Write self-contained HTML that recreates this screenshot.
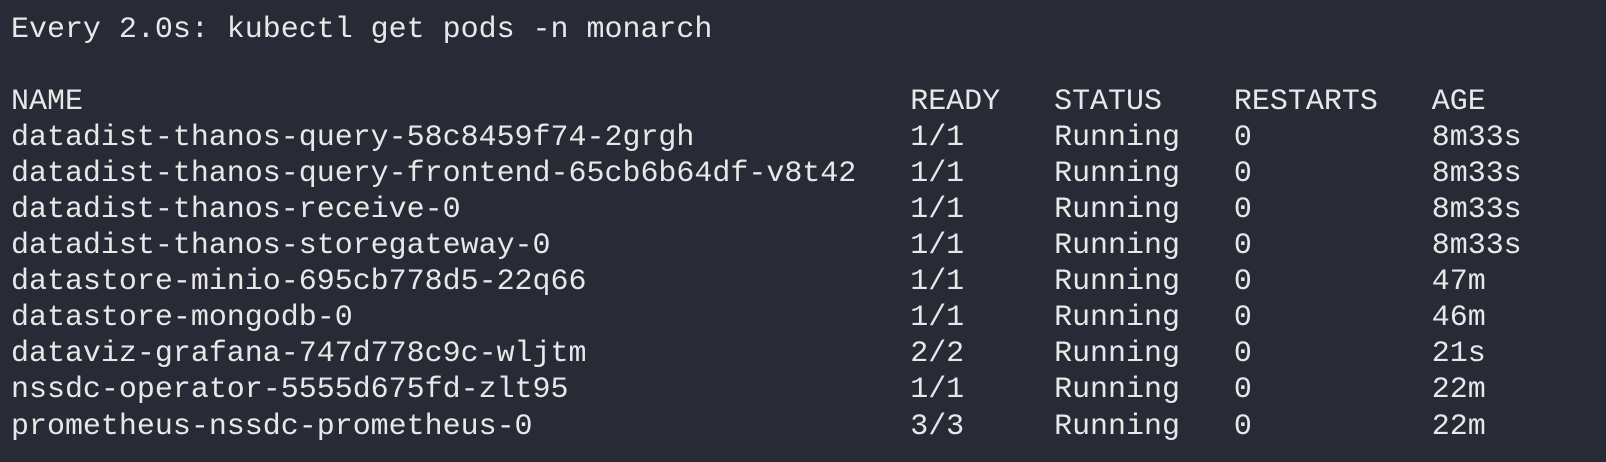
<!DOCTYPE html>
<html><head><style>
html,body{margin:0;padding:0;background:#282a35;width:1606px;height:462px;overflow:hidden}
pre{margin:0;padding:11px 0 0 11px;font-family:"Liberation Mono",monospace;font-size:29.97px;line-height:36.05px;color:#e8e8e8;white-space:pre}
</style></head><body><pre>Every 2.0s: kubectl get pods -n monarch

NAME                                              READY   STATUS    RESTARTS   AGE
datadist-thanos-query-58c8459f74-2grgh            1/1     Running   0          8m33s
datadist-thanos-query-frontend-65cb6b64df-v8t42   1/1     Running   0          8m33s
datadist-thanos-receive-0                         1/1     Running   0          8m33s
datadist-thanos-storegateway-0                    1/1     Running   0          8m33s
datastore-minio-695cb778d5-22q66                  1/1     Running   0          47m
datastore-mongodb-0                               1/1     Running   0          46m
dataviz-grafana-747d778c9c-wljtm                  2/2     Running   0          21s
nssdc-operator-5555d675fd-zlt95                   1/1     Running   0          22m
prometheus-nssdc-prometheus-0                     3/3     Running   0          22m</pre></body></html>
